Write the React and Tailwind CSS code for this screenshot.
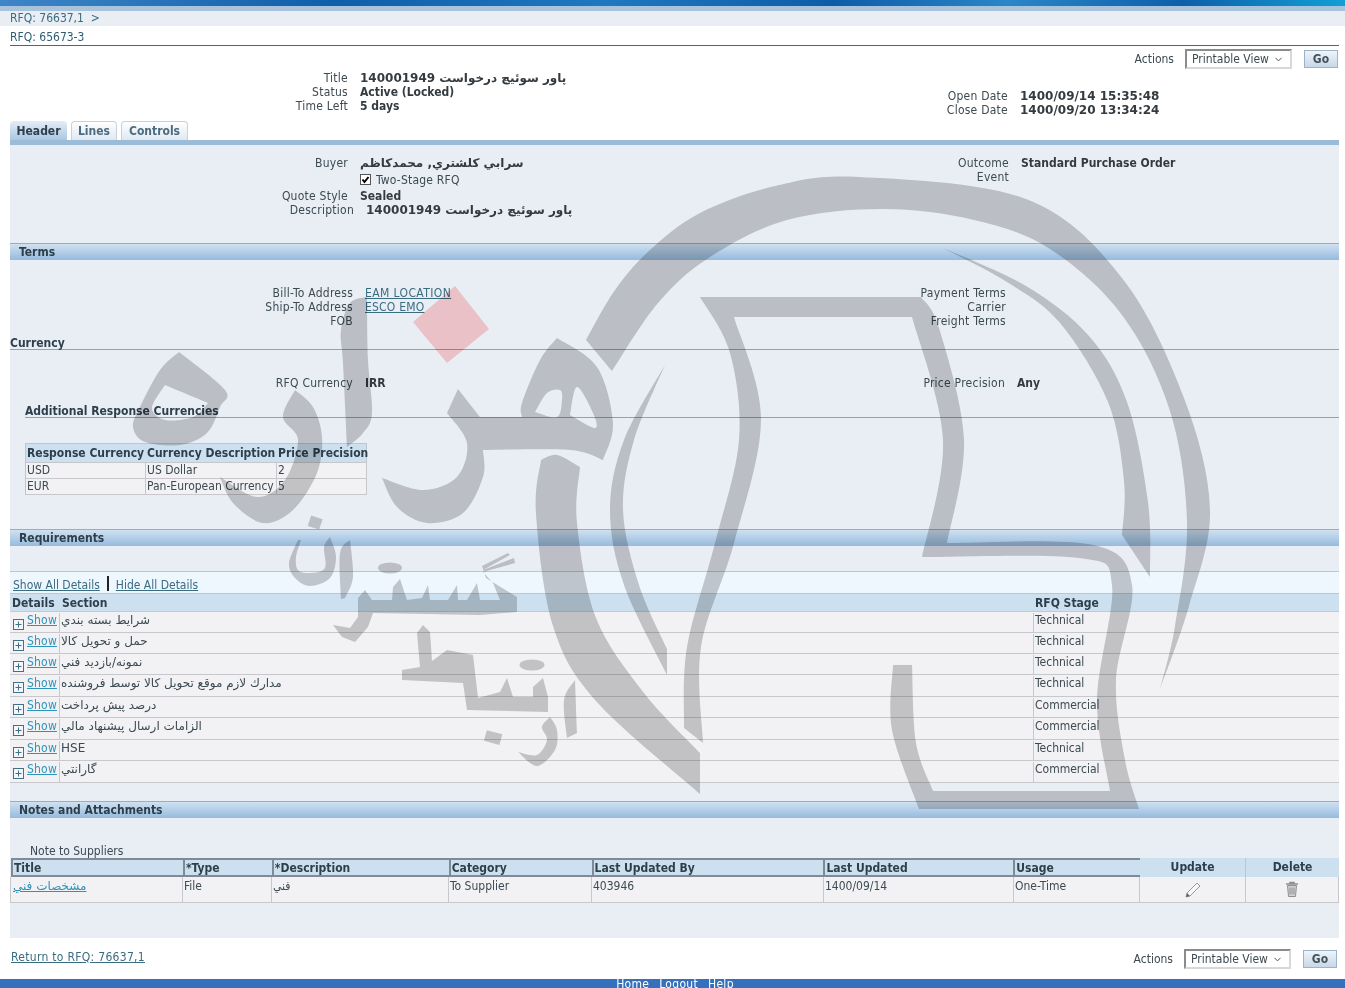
import { ChevronDown } from 'lucide-react';

const requirementRows = [
  { section: 'شرايط بسته بندي', stage: 'Technical', height: 'h-[21px]' },
  { section: 'حمل و تحويل كالا', stage: 'Technical', height: 'h-[21px]' },
  { section: 'نمونه/بازديد فني', stage: 'Technical', height: 'h-[21px]' },
  { section: 'مدارك لازم موقع تحويل كالا توسط فروشنده', stage: 'Technical', height: 'h-[22px]' },
  { section: 'درصد پيش پرداخت', stage: 'Commercial', height: 'h-[21px]' },
  { section: 'الزامات ارسال پيشنهاد مالي', stage: 'Commercial', height: 'h-[22px]' },
  { section: 'HSE', stage: 'Technical', height: 'h-[21px]' },
  { section: 'گارانتي', stage: 'Commercial', height: 'h-[22px]' },
];

// smooth open curve through the points, each part starts where the last one ended
const curve = (pts) => {
  let d = '';
  for (let i = 0; i < pts.length - 1; i++) {
    const p0 = pts[i - 1] || pts[i];
    const p1 = pts[i];
    const p2 = pts[i + 1];
    const p3 = pts[i + 2] || p2;
    d += ` C${p1[0] + (p2[0] - p0[0]) / 6} ${p1[1] + (p2[1] - p0[1]) / 6} ${p2[0] - (p3[0] - p1[0]) / 6} ${p2[1] - (p3[1] - p1[1]) / 6} ${p2[0]} ${p2[1]}`;
  }
  return d;
};
const shape = (...parts) => `M${parts[0][0][0]} ${parts[0][0][1]}` + parts.map(curve).join('') + ' Z';
const poly = (pts) => 'M' + pts.map((p) => p.join(' ')).join(' L') + ' Z';

const logoShapes = [
  // outer ring
  shape(
    [[586, 340], [612, 371]],
    [[612, 371], [658, 303], [710, 257], [787, 220], [883, 209], [974, 220], [1050, 249], [1122, 315], [1170, 411], [1187, 523], [1175, 626], [1160, 689]],
    [[1160, 689], [1189, 606], [1210, 510], [1184, 398], [1122, 278], [1026, 199], [859, 177], [775, 186], [700, 213], [650, 250], [615, 290], [586, 340]],
  ),
  // thin right arc
  shape(
    [[943, 248], [1026, 286], [1089, 336], [1127, 402], [1148, 502], [1150, 577]],
    [[1150, 577], [1122, 535]],
    [[1122, 535], [1124, 481], [1108, 402], [1060, 323], [1007, 282], [943, 248]],
  ),
  // thick left arc
  shape(
    [[541, 460], [536, 514], [553, 626], [596, 701], [700, 794]],
    [[700, 794], [700, 753]],
    [[700, 753], [644, 693], [596, 618], [577, 523], [580, 467]],
    [[580, 467], [557, 455], [541, 460]],
  ),
  // inner crescent
  shape(
    [[665, 365], [624, 440], [610, 510], [624, 585], [667, 675]],
    [[667, 675], [667, 649]],
    [[667, 649], [639, 585], [623, 510], [634, 440], [665, 365]],
  ),
  // head outline
  shape(
    [[700, 297], [921, 297]],
    [[921, 297], [939, 328], [964, 440], [947, 543]],
    [[947, 543], [1093, 545], [1132, 585], [1116, 680], [1125, 760], [1139, 809]],
    [[1139, 809], [919, 809]],
    [[919, 809], [892, 730], [893, 665]],
    [[893, 665], [912, 665]],
    [[912, 665], [916, 743], [933, 791]],
    [[933, 791], [1110, 791]],
    [[1110, 791], [1097, 700], [1112, 585], [1079, 558], [922, 557]],
    [[922, 557], [943, 440], [912, 317]],
    [[912, 317], [734, 317]],
    [[734, 317], [761, 419], [734, 543], [701, 647], [703, 743]],
    [[703, 743], [684, 728]],
    [[684, 728], [687, 647], [715, 543], [739, 440], [730, 353], [700, 297]],
  ),
  // ه loop, hole cut with evenodd
  shape(
    [[179, 352], [225, 390], [220, 407], [207, 433], [180, 445], [145, 442], [133, 427], [140, 407], [160, 370], [179, 352]],
  ) + shape(
    [[165, 385], [208, 403]],
    [[208, 403], [193, 417], [165, 420], [152, 408], [165, 385]],
  ),
  // ر below the loop
  shape(
    [[295, 390], [313, 407], [322, 437], [317, 473], [293, 510], [263, 523], [233, 503], [220, 477]],
    [[220, 477], [257, 497], [285, 480], [298, 440], [283, 417], [295, 390]],
  ),
  // ا
  shape(
    [[367, 297], [368, 360], [372, 413], [363, 433], [347, 447]],
    [[347, 447], [343, 363], [341, 330], [350, 303], [367, 297]],
  ),
  // هـ and ز body
  shape(
    [[447, 413], [458, 389]],
    [[458, 389], [480, 417]],
    [[480, 417], [522, 417]],
    [[522, 417], [522, 403], [540, 360], [557, 338]],
    [[557, 338], [597, 367], [613, 423], [603, 460]],
    [[603, 460], [570, 450], [483, 450]],
    [[483, 450], [483, 477], [463, 513], [427, 523], [397, 507], [382, 478]],
    [[382, 478], [423, 490], [457, 477], [467, 443], [447, 413]],
  ) + shape(
    [[535, 412], [547, 393], [560, 390], [562, 400], [557, 417], [535, 412]],
  ) + shape(
    [[570, 415], [577, 387], [593, 413], [595, 428], [570, 415]],
  ),
  // logo lettering, lower left
  shape(
    [[298, 540], [289, 563], [295, 578], [310, 586], [330, 578], [336, 557], [330, 537]],
    [[330, 537], [324, 547], [325, 568], [310, 573], [298, 570], [296, 557], [301, 540]],
  ),
  shape(
    [[350, 540], [353, 577], [345, 598]],
    [[345, 598], [341, 599]],
    [[341, 599], [340, 553], [350, 540]],
  ),
  poly([
    [333, 625], [350, 628], [358, 617], [358, 598], [365, 590], [372, 600], [392, 600], [393, 587], [400, 579], [407, 600],
    [422, 598], [428, 585], [430, 600], [448, 600], [457, 585], [458, 600], [467, 600], [477, 583], [480, 600], [500, 600],
    [493, 583], [483, 572], [515, 563], [514, 558], [483, 570], [510, 555], [508, 553], [482, 566], [486, 578], [517, 597],
    [517, 612], [480, 615], [373, 613], [368, 627], [355, 642], [342, 637],
  ]),
  poly([
    [423, 625], [417, 633], [420, 667], [402, 670], [402, 680], [463, 683], [467, 710], [548, 712], [548, 697], [543, 678],
    [533, 687], [533, 697], [513, 697], [507, 678], [500, 692], [478, 698], [473, 655], [447, 650], [432, 661], [430, 632],
  ]),
  shape(
    [[575, 680], [577, 733]],
    [[577, 733], [567, 738]],
    [[567, 738], [564, 700], [575, 680]],
  ),
  shape(
    [[550, 717], [557, 730], [555, 750], [537, 766], [518, 752]],
    [[518, 752], [537, 755], [547, 740], [542, 727], [550, 717]],
  ),
];

const Watermark = () => (
  <svg
    className="absolute left-0 top-0 pointer-events-none mix-blend-multiply"
    width="1345"
    height="988"
    viewBox="0 0 1345 988"
  >
    {logoShapes.map((d, i) => (
      <path key={i} d={d} fill="#cdcdcd" fillRule="evenodd" />
    ))}
    <rect x="309" y="517" width="12" height="11" fill="#cdcdcd" transform="rotate(18 315 523)" />
    <rect x="485" y="732" width="16" height="11" fill="#cdcdcd" transform="rotate(15 493 738)" />
    <ellipse cx="390" cy="568" rx="12" ry="5.5" fill="#cdcdcd" />
    <ellipse cx="532" cy="665" rx="12.5" ry="5.5" fill="#cdcdcd" />
    <polygon points="455,286 489,329 447,363 413,322" fill="#ffcfcf" />
  </svg>
);

const Field = ({ label, labelWidth, gap = 'ml-3', bold = true, children }) => (
  <div className="flex h-[14px] leading-[14px]">
    <span className={`${labelWidth} shrink-0 text-right text-[#3c4a52] tracking-[0.25px]`}>{label}</span>
    <span className={`${gap} ${bold ? 'font-bold text-[#333b40]' : 'text-[#3c4a52]'}`}>{children}</span>
  </div>
);

const SectionBar = ({ title, className = '' }) => (
  <div className={`h-[17px] pl-[9px] border-t border-[#8db0d2] bg-gradient-to-b from-[#d0e1f1] to-[#96bade] font-bold leading-[17px] text-[#2d3f4b] ${className}`}>
    {title}
  </div>
);

const ActionsBar = ({ className = '' }) => (
  <div className={`flex items-center justify-end ${className}`}>
    <span className="mr-[11px] text-[#3c4a52]">Actions</span>
    <div className="flex items-center justify-between w-[107px] h-[20px] pl-[5px] pr-[6px] border-2 border-t-[#8b8b8b] border-l-[#8b8b8b] border-r-[#d8d8d8] border-b-[#d8d8d8] bg-white text-[#3c4a52]">
      Printable View
      <ChevronDown size={11} strokeWidth={2} className="text-[#444]" />
    </div>
    <div className="ml-3 mr-px w-[34px] h-[18px] flex items-center justify-center border border-[#9db4c8] bg-gradient-to-b from-[#eef4f9] to-[#c6d8e8] font-bold text-[#44525c]">
      Go
    </div>
  </div>
);

const PlusBox = () => (
  <svg width="11" height="11" viewBox="0 0 11 11" className="shrink-0 mt-[6px]">
    <rect x="0.5" y="0.5" width="10" height="10" fill="#f4f7fa" stroke="#44708c" />
    <path d="M5.5 2.5v6M2.5 5.5h6" stroke="#44708c" />
  </svg>
);

const PencilIcon = () => (
  <svg width="18" height="18" viewBox="0 0 18 18" fill="none">
    <path d="M2 16l1-4L13 2l3 3L6 15z" fill="#f7f7f7" stroke="#9a9a9a" />
    <path d="M2 16l1-4 3 3z" fill="#666" />
  </svg>
);

const TrashIcon = () => (
  <svg width="16" height="17" viewBox="0 0 16 17" fill="none">
    <path d="M2 3h12M6 3V1.5h4V3" stroke="#8f8f8f" strokeWidth="1.5" />
    <path d="M3.5 4.5h9l-1 11h-7z" fill="#d2d2d2" stroke="#8f8f8f" />
    <path d="M6 6.5v7M8 6.5v7M10 6.5v7" stroke="#8f8f8f" />
  </svg>
);

const App = () => (
  <div className="relative w-[1345px] h-[988px] overflow-hidden bg-white text-[12px] leading-[14px] text-[#3c4a52] font-['DejaVu_Sans','Noto_Sans',sans-serif] font-stretch-condensed">
    {/* Top brand strip */}
    <div className="h-[6px] bg-[linear-gradient(90deg,#3f86c8_0%,#0f5ea8_25%,#1f78c0_45%,#0e5ca6_62%,#2a86c8_75%,#0d5fa8_88%,#12a0d4_100%)]" />
    <div className="h-[5px] bg-[#a9c3dd]" />
    <div className="h-[15px] pl-[10px] bg-[#e9eef5] leading-[14px] text-[#3a6c80]">RFQ: 76637,1 &nbsp;&gt;</div>

    <div className="pl-[10px] pr-[6px]">
      <div className="h-[20px] pt-[4px] border-b border-[#48697c] font-medium text-[#2f5c70]">RFQ: 65673-3</div>
      <ActionsBar className="mt-[3px] h-[20px]" />

      {/* Summary */}
      <div className="flex mt-[2px] h-[50px]">
        <div className="w-[670px]">
          <Field label="Title" labelWidth="w-[338px]">
            <bdi className="font-stretch-normal">پاور سوئيچ درخواست 140001949</bdi>
          </Field>
          <Field label="Status" labelWidth="w-[338px]">Active (Locked)</Field>
          <Field label="Time Left" labelWidth="w-[338px]">5 days</Field>
        </div>
        <div className="pt-[18px]">
          <Field label="Open Date" labelWidth="w-[328px]"><span className="font-stretch-normal">1400/09/14 15:35:48</span></Field>
          <Field label="Close Date" labelWidth="w-[328px]"><span className="font-stretch-normal">1400/09/20 13:34:24</span></Field>
        </div>
      </div>

      {/* Tabs */}
      <div className="flex h-[19px] gap-[4px]">
        <div className="w-[57px] rounded-t-[4px] bg-gradient-to-b from-[#e4edf6] to-[#a9c7e2] pt-[3px] text-center font-bold text-[#2d3f4b]">Header</div>
        <div className="w-[46px] rounded-t-[4px] border border-b-0 border-[#c5d2de] bg-gradient-to-b from-white to-[#dfe8f1] pt-[2px] text-center font-bold text-[#4b6b80]">Lines</div>
        <div className="w-[67px] rounded-t-[4px] border border-b-0 border-[#c5d2de] bg-gradient-to-b from-white to-[#dfe8f1] pt-[2px] text-center font-bold text-[#4b6b80]">Controls</div>
      </div>
      <div className="h-[5px] bg-[#9bbcd9]" />

      <div className="h-[793px] bg-[#e9eef5]">
        {/* Header details */}
        <div className="flex h-[98px] pt-[11px]">
          <div className="w-[670px]">
            <Field label="Buyer" labelWidth="w-[338px]">
              <bdi className="font-stretch-normal">سرابي كلشتري, محمدكاظم</bdi>
            </Field>
            <div className="flex h-[19px] pl-[350px] items-center">
              <svg width="11" height="11" viewBox="0 0 11 11">
                <rect x="0.5" y="0.5" width="10" height="10" fill="#fff" stroke="#555" />
                <path d="M2.5 5.5l2 2.5 4-5" fill="none" stroke="#000" strokeWidth="2" />
              </svg>
              <span className="ml-[5px] tracking-[0.2px]">Two-Stage RFQ</span>
            </div>
            <Field label="Quote Style" labelWidth="w-[338px]">Sealed</Field>
            <Field label="Description" labelWidth="w-[344px]">
              <bdi className="font-stretch-normal">پاور سوئيچ درخواست 140001949</bdi>
            </Field>
          </div>
          <div>
            <Field label="Outcome" labelWidth="w-[329px]">Standard Purchase Order</Field>
            <Field label="Event" labelWidth="w-[329px]" />
          </div>
        </div>

        <SectionBar title="Terms" />

        <div className="flex mt-[26px] h-[42px]">
          <div className="w-[670px]">
            <Field label="Bill-To Address" labelWidth="w-[343px]"><span className="font-normal tracking-[0.4px] text-[#3a6c80] underline">EAM LOCATION</span></Field>
            <Field label="Ship-To Address" labelWidth="w-[343px]"><span className="font-normal tracking-[0.2px] text-[#3a6c80] underline">ESCO EMO</span></Field>
            <Field label="FOB" labelWidth="w-[343px]" />
          </div>
          <div>
            <Field label="Payment Terms" labelWidth="w-[326px]" />
            <Field label="Carrier" labelWidth="w-[326px]" />
            <Field label="Freight Terms" labelWidth="w-[326px]" />
          </div>
        </div>

        <div className="mt-[8px] h-[14px] border-b border-[#7fa6cc] font-bold text-[#2d3f4b]">Currency</div>

        <div className="flex mt-[26px] h-[14px]">
          <div className="w-[670px]">
            <Field label="RFQ Currency" labelWidth="w-[343px]">IRR</Field>
          </div>
          <Field label="Price Precision" labelWidth="w-[325px]">Any</Field>
        </div>

        <div className="ml-[15px] mt-[7px] h-[21px] pt-[7px] border-b border-[#7fa6cc] font-bold text-[#2d3f4b]">Additional Response Currencies</div>

        {/* Response currencies table */}
        <div className="ml-[15px] mt-[25px] w-[342px] border-l border-t border-[#bfc6cc]">
          <div className="flex h-[18px] bg-[#cde0f0] font-bold leading-[18px] text-[#2d3f4b]">
            <div className="w-[120px] pl-[1px] whitespace-nowrap">Response Currency</div>
            <div className="w-[131px] pl-[1px] whitespace-nowrap">Currency Description</div>
            <div className="w-[90px] pl-[1px] whitespace-nowrap border-r border-[#bfc6cc]">Price Precision</div>
          </div>
          {[['USD', 'US Dollar', '2'], ['EUR', 'Pan-European Currency', '5']].map((row) => (
            <div key={row[0]} className="flex h-[17px] border-t border-b border-[#c8c8cc] -mb-px bg-[#f2f2f5] leading-[15px]">
              <div className="w-[120px] pl-[1px] border-r border-[#c8c8cc]">{row[0]}</div>
              <div className="w-[131px] pl-[1px] border-r border-[#c8c8cc] whitespace-nowrap">{row[1]}</div>
              <div className="w-[90px] pl-[1px] border-r border-[#c8c8cc]">{row[2]}</div>
            </div>
          ))}
        </div>

        <SectionBar title="Requirements" className="mt-[35px]" />

        {/* Requirements table */}
        <div className="mt-[25px]">
          <div className="flex h-[22px] pl-[3px] pt-[6px] border-t border-[#b9c7d4] bg-[#eef6fe] text-[#3a6c80]">
            <span className="underline">Show All Details</span>
            <span className="mx-[7px] w-[2px] h-[15px] -mt-[2px] bg-[#222]" />
            <span className="underline">Hide All Details</span>
          </div>
          <div className="flex h-[18px] pl-[1px] border-t border-[#b9c7d4] bg-[#cde0f0] font-bold leading-[18px] text-[#2d3f4b]">
            <div className="w-[49px] pl-[1px]">Details</div>
            <div className="w-[973px] pl-[2px]">Section</div>
            <div className="pl-[2px]">RFQ Stage</div>
          </div>
          {requirementRows.map((row) => (
            <div key={row.section} className={`flex ${row.height} pl-[1px] pt-px border-t border-[#c8c8cc] bg-[#f2f2f5]`}>
              <div className="flex w-[49px] pl-[2px] gap-[3px] border-r border-[#c8c8cc]">
                <PlusBox />
                <span className="underline text-[#2f93b8] tracking-[0.2px]">Show</span>
              </div>
              <div className="w-[974px] pl-[1px] border-r border-[#c8c8cc]"><bdi className="font-stretch-normal">{row.section}</bdi></div>
              <div className="pl-[1px]">{row.stage}</div>
            </div>
          ))}
          <div className="h-px bg-[#c8c8cc]" />
        </div>

        <SectionBar title="Notes and Attachments" className="mt-[18px]" />

        <div className="ml-[20px] mt-[26px] h-[14px] leading-[14px]">Note to Suppliers</div>

        {/* Attachments table */}
        <div className="flex h-[19px] pl-[1px] font-bold leading-[19px] text-[#2d3f4b]">
          {[
            ['Title', 'w-[173px]'],
            ['*Type', 'w-[90px]'],
            ['*Description', 'w-[178px]'],
            ['Category', 'w-[144px]'],
            ['Last Updated By', 'w-[233px]'],
            ['Last Updated', 'w-[191px]'],
            ['Usage', 'w-[127px]'],
          ].map(([name, width]) => (
            <div key={name} className={`${width} pl-[1px] border-2 border-r-0 last:border-r-2 border-[#7f8a94] bg-[#cde0f0] -ml-px first:ml-0 leading-[16px]`}>{name}</div>
          ))}
          <div className="w-[106px] text-center bg-[#cde0f0] border-r border-[#b9c7d4]">Update</div>
          <div className="w-[93px] text-center bg-[#cde0f0]">Delete</div>
        </div>
        <div className="flex h-[26px] pl-0 border-b border-[#c8c8cc] bg-[#f2f2f5]">
          <div className="w-[173px] pl-[2px] pt-[2px] border-r border-l border-[#c8c8cc] underline text-[#2f93b8]"><bdi className="font-stretch-normal">مشخصات فني</bdi></div>
          <div className="w-[89px] pl-[1px] pt-[2px] border-r border-[#c8c8cc]">File</div>
          <div className="w-[177px] pl-[1px] pt-[2px] border-r border-[#c8c8cc]"><bdi>فني</bdi></div>
          <div className="w-[143px] pl-[1px] pt-[2px] border-r border-[#c8c8cc]">To Supplier</div>
          <div className="w-[232px] pl-[1px] pt-[2px] border-r border-[#c8c8cc]">403946</div>
          <div className="w-[190px] pl-[1px] pt-[2px] border-r border-[#c8c8cc]">1400/09/14</div>
          <div className="w-[126px] pl-[1px] pt-[2px] border-r border-[#c8c8cc]">One-Time</div>
          <div className="w-[106px] flex items-center justify-center border-r border-[#c8c8cc]"><PencilIcon /></div>
          <div className="w-[93px] flex items-center justify-center border-r border-[#c8c8cc]"><TrashIcon /></div>
        </div>
      </div>

      {/* Bottom actions */}
      <div className="flex items-start justify-between h-[41px] pt-[11px]">
        <span className="pl-px mt-px underline tracking-[0.3px] text-[#3a6c80]">Return to RFQ: 76637,1</span>
        <ActionsBar className="mr-px" />
      </div>
    </div>

    <div className="flex justify-center gap-[10px] pl-[5px] h-[9px] bg-[#3570bc] text-white leading-[11px] tracking-[0.3px]">
      <span>Home</span>
      <span>Logout</span>
      <span>Help</span>
    </div>

    <Watermark />
  </div>
);

export default App;
